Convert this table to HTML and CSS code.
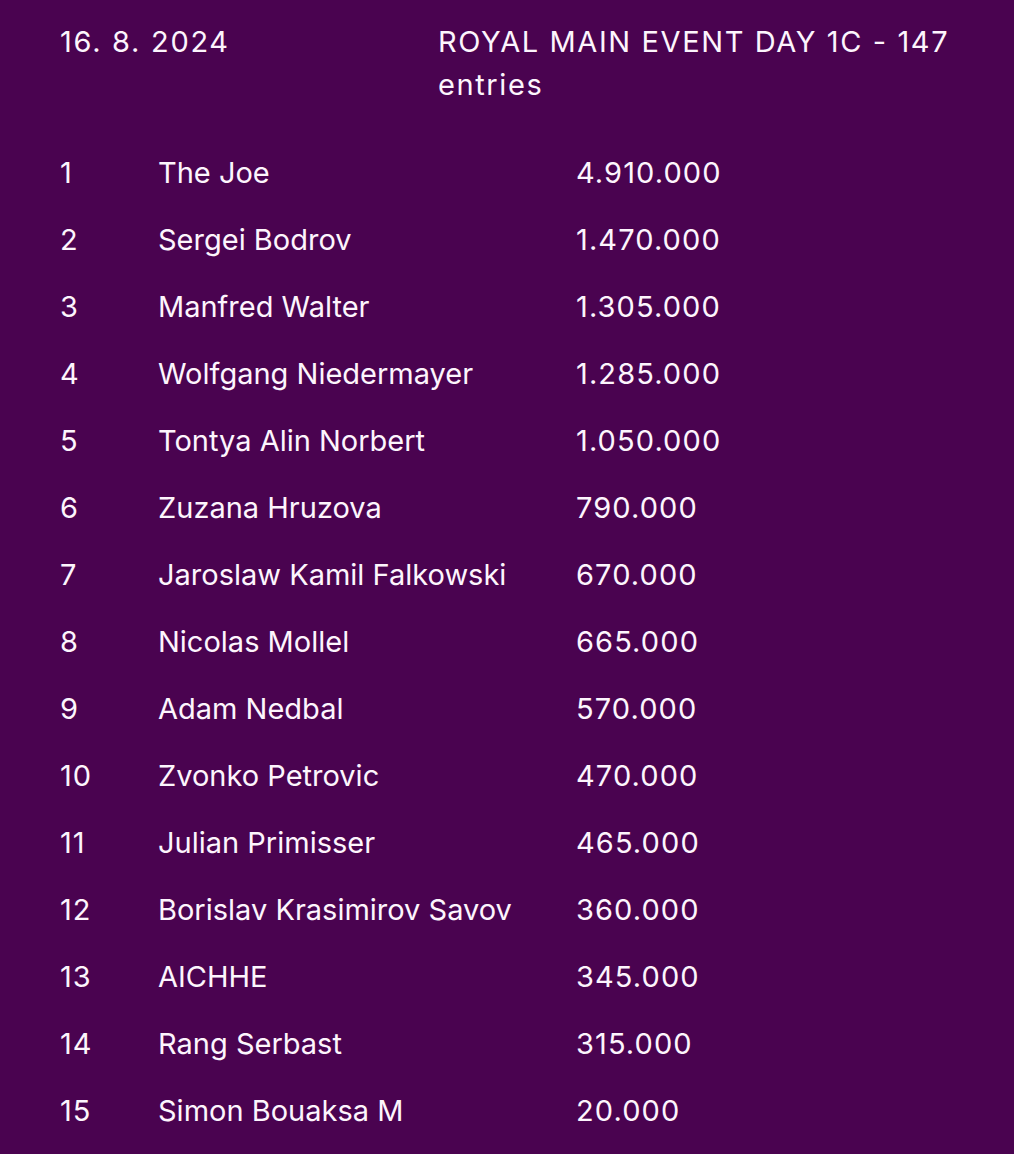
FILE: index.html
```html
<!DOCTYPE html>
<html lang="en">
<head>
<meta charset="utf-8">
<link rel="stylesheet" href="styles.css">
</head>
<body>
<main class="page">
  <header class="head">
    <div class="date">16. 8. 2024</div>
    <div class="title">ROYAL MAIN EVENT DAY 1C - 147 entries</div>
  </header>
  <div class="table">
    <div class="row"><span class="rank">1</span><span class="name">The Joe</span><span class="chips">4.910.000</span></div>
    <div class="row"><span class="rank">2</span><span class="name">Sergei Bodrov</span><span class="chips">1.470.000</span></div>
    <div class="row"><span class="rank">3</span><span class="name">Manfred Walter</span><span class="chips">1.305.000</span></div>
    <div class="row"><span class="rank">4</span><span class="name">Wolfgang Niedermayer</span><span class="chips">1.285.000</span></div>
    <div class="row"><span class="rank">5</span><span class="name">Tontya Alin Norbert</span><span class="chips">1.050.000</span></div>
    <div class="row"><span class="rank">6</span><span class="name">Zuzana Hruzova</span><span class="chips">790.000</span></div>
    <div class="row"><span class="rank">7</span><span class="name">Jaroslaw Kamil Falkowski</span><span class="chips">670.000</span></div>
    <div class="row"><span class="rank">8</span><span class="name">Nicolas Mollel</span><span class="chips">665.000</span></div>
    <div class="row"><span class="rank">9</span><span class="name">Adam Nedbal</span><span class="chips">570.000</span></div>
    <div class="row"><span class="rank">10</span><span class="name">Zvonko Petrovic</span><span class="chips">470.000</span></div>
    <div class="row"><span class="rank">11</span><span class="name">Julian Primisser</span><span class="chips">465.000</span></div>
    <div class="row"><span class="rank">12</span><span class="name">Borislav Krasimirov Savov</span><span class="chips">360.000</span></div>
    <div class="row"><span class="rank">13</span><span class="name">AICHHE</span><span class="chips">345.000</span></div>
    <div class="row"><span class="rank">14</span><span class="name">Rang Serbast</span><span class="chips">315.000</span></div>
    <div class="row"><span class="rank">15</span><span class="name">Simon Bouaksa M</span><span class="chips">20.000</span></div>
  </div>
</main>
</body>
</html>
```

FILE: styles.css
```css
html, body {
  margin: 0;
  padding: 0;
  background: #4a0350;
}
body {
  color: #fdf5fd;
  font-family: Inter, "Noto Sans", sans-serif;
  font-size: 29px;
}
.page {
  padding: 20px 60px 0 60px;
  min-height: 1154px;
  box-sizing: border-box;
}
.head {
  display: grid;
  grid-template-columns: 378px 1fr;
  line-height: 43px;
}
.date {
  letter-spacing: 1.7px;
}
.title {
  letter-spacing: 1.6px;
}
.table {
  margin-top: 33px;
  display: flex;
  flex-direction: column;
}
.row {
  display: grid;
  grid-template-columns: 98px 418px 1fr;
  height: 67px;
  align-items: center;
  line-height: 43px;
}
.rank {
  letter-spacing: 1px;
}
.chips {
  letter-spacing: 1.1px;
}
```
